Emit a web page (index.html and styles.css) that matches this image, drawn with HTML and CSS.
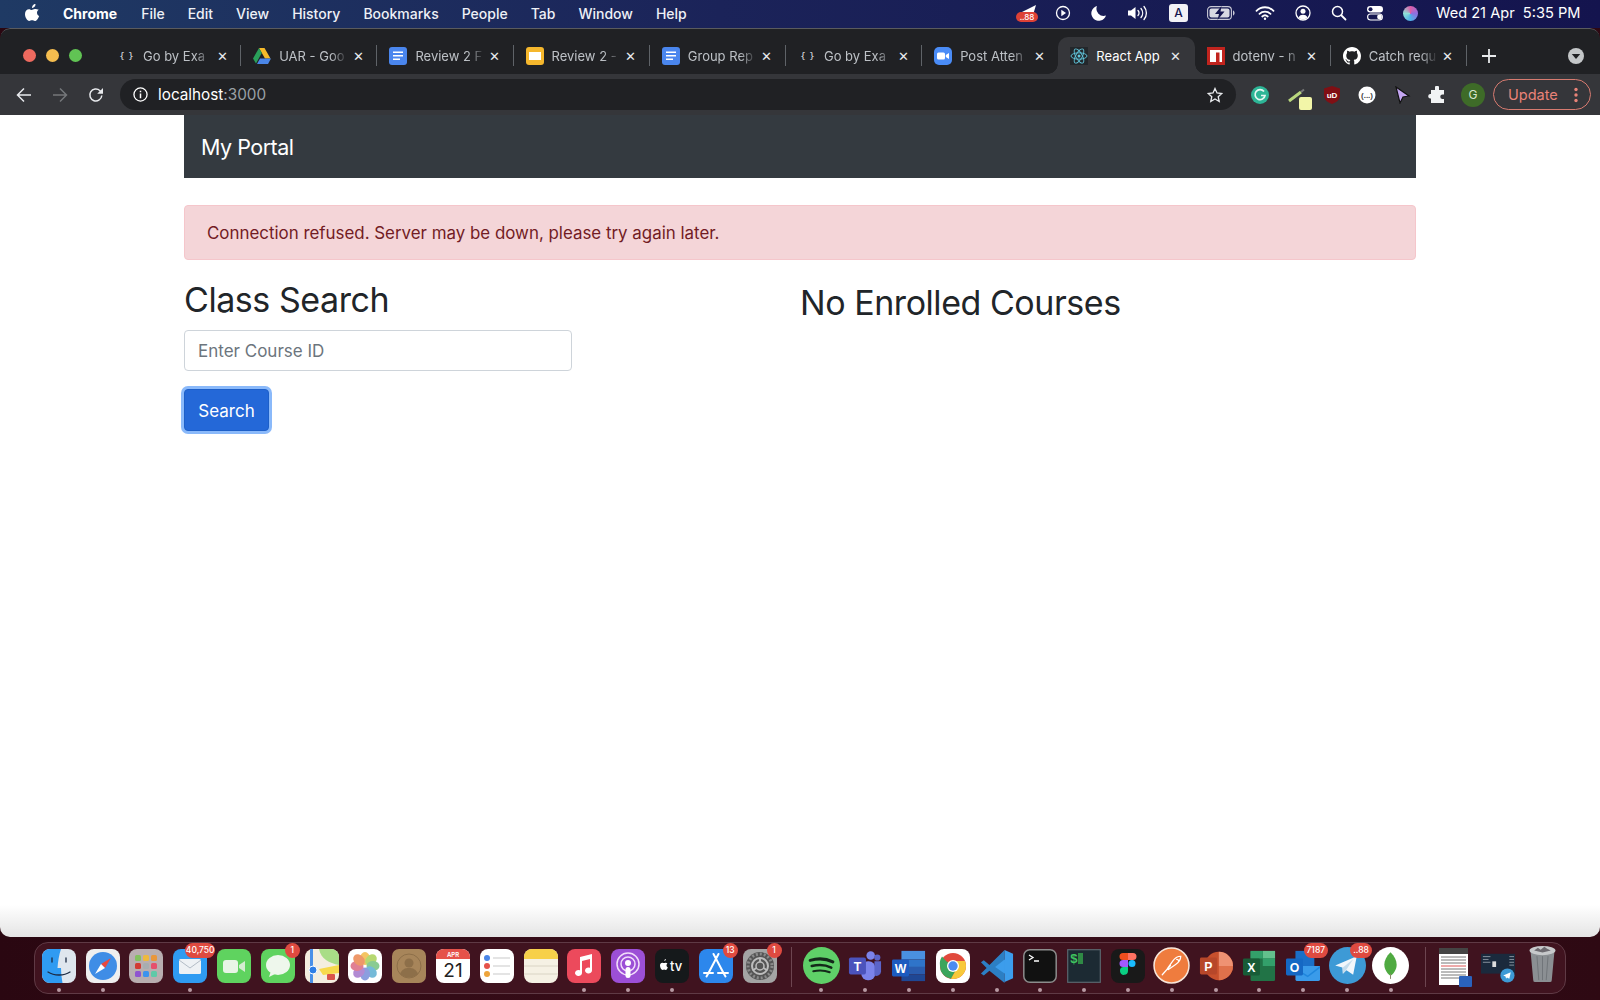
FILE: index.html
```html
<!DOCTYPE html>
<html lang="en">
<head>
  <meta charset="UTF-8">
  <title>React App</title>
  <link rel="stylesheet" href="styles.css">
</head>
<body>

<!-- menu bar -->
<header class="menubar">
  <svg class="apple" viewBox="0 0 16 18"><path fill="#fff" d="M11.2 0c.1 1.100-.3 2.100-1 2.900-.7.800-1.700 1.300-2.700 1.200-.1-1 .4-2.100 1-2.800C9 .5 10.200 0 11.200 0zM14.700 6.100c-1.200.8-1.900 1.900-1.900 3.200 0 1.500.9 2.800 2.300 3.400-.4 1.100-.9 2.100-1.600 3.100-.9 1.300-1.800 2.200-3 2.200-1.200 0-1.600-.7-3-.7s-1.900.7-3 .7c-1.200 0-2.100-1-3-2.400C.3 14 0 11.900 0 10.500c0-3.300 2.100-5.100 4.200-5.100 1.200 0 2.200.8 3 .8.700 0 1.900-.9 3.300-.9 1.200 0 3.300.3 4.200.8z"/></svg>
  <nav class="menu">
    <span class="menu-app">Chrome</span>
    <span>File</span>
    <span>Edit</span>
    <span>View</span>
    <span>History</span>
    <span>Bookmarks</span>
    <span>People</span>
    <span>Tab</span>
    <span>Window</span>
    <span>Help</span>
  </nav>
  <div class="status">
    <span class="status-item status-telegram">
      <svg viewBox="0 0 22 18" width="22" height="18"><path fill="#fff" d="M4 9 L20 1 L17 11 L11 9z"/><rect x="0" y="8" width="22" height="10" rx="5" fill="#dd4136"/></svg>
      <b class="status-badge">..88</b>
    </span>
    <svg class="status-item" viewBox="0 0 16 16" width="16" height="16"><circle cx="8" cy="8" r="6.500" fill="none" stroke="#fff" stroke-width="1.300"/><path fill="#fff" d="M6.300 4.800 11 8l-4.700 3.200z"/></svg>
    <svg class="status-item" viewBox="0 0 16 16" width="16" height="16"><path fill="#fff" d="M6 1a7.200 7.200 0 0 0 9 9.500A7.500 7.500 0 1 1 6 1z"/></svg>
    <svg class="status-item" viewBox="0 0 22 16" width="22" height="16"><path fill="#fff" d="M1 5.500h3L8.500 2v12L4 10.500H1z"/><path fill="none" stroke="#fff" stroke-width="1.300" stroke-linecap="round" d="M11 5.500a3.500 3.500 0 0 1 0 5M14 3.500a7 7 0 0 1 0 9M17 1.500a10 10 0 0 1 0 13"/></svg>
    <span class="status-item status-input">A</span>
    <svg class="status-item status-battery" viewBox="0 0 28 14" width="28" height="14"><rect x=".6" y=".6" width="23.800" height="12.800" rx="3.500" fill="none" stroke="#c9c9d6" stroke-width="1.100"/><path fill="#c9c9d6" d="M26 4.500c1 .3 1.600 1.300 1.600 2.500s-.6 2.200-1.600 2.500z"/><rect x="2.500" y="2.500" width="20" height="9" rx="2" fill="#d8d8e2"/><path fill="#15154f" d="M14.500 0 8 8h4l-1.500 6 7-8.500h-4z"/></svg>
    <svg class="status-item" viewBox="0 0 20 14" width="20" height="14"><path fill="none" stroke="#fff" stroke-width="1.800" stroke-linecap="round" d="M1.500 4.800a12 12 0 0 1 17 0M4.500 7.800a8 8 0 0 1 11 0M7.300 10.500a4 4 0 0 1 5.400 0"/><circle cx="10" cy="12.800" r="1.200" fill="#fff"/></svg>
    <svg class="status-item" viewBox="0 0 16 16" width="16" height="16"><circle cx="8" cy="8" r="7" fill="none" stroke="#fff" stroke-width="1.300"/><circle cx="8" cy="6.300" r="2.500" fill="#fff"/><path fill="#fff" d="M3.500 12.500C4.500 10.500 6 9.800 8 9.800s3.500.7 4.500 2.700A6.500 6.500 0 0 1 8 14.500a6.500 6.500 0 0 1-4.500-2z"/></svg>
    <svg class="status-item" viewBox="0 0 16 16" width="16" height="16"><circle cx="6.500" cy="6.500" r="5" fill="none" stroke="#fff" stroke-width="1.500"/><path stroke="#fff" stroke-width="1.800" stroke-linecap="round" d="m10.500 10.500 4 4"/></svg>
    <svg class="status-item" viewBox="0 0 16 16" width="16" height="16"><rect x="0" y="1" width="16" height="6.500" rx="3.250" fill="#fff"/><circle cx="3.500" cy="4.250" r="2" fill="#15154f"/><rect x=".6" y="9" width="14.800" height="6" rx="3" fill="none" stroke="#fff" stroke-width="1.100"/><circle cx="12.500" cy="12" r="2.400" fill="#fff"/></svg>
    <span class="status-item status-siri"></span>
    <span class="status-clock">Wed 21 Apr&nbsp; 5:35 PM</span>
  </div>
</header>

<main class="browser">
  <!-- tab strip -->
  <div class="tabstrip">
    <div class="traffic">
      <span class="light light-red"></span>
      <span class="light light-yellow"></span>
      <span class="light light-green"></span>
    </div>
    <div class="tabs">
      <div class="tab">
        <span class="favicon favicon-code">{ }</span>
        <span class="tab-title">Go by Exa</span>
        <span class="tab-close">✕</span>
      </div>
      <div class="tab">
        <svg class="favicon" viewBox="0 0 18 16"><path fill="#f6bb2a" d="M6 0h5.500l6 10.500h-5.500z"/><path fill="#2aa05a" d="M6 0l2.800 5L3 15.500 0 10.500z"/><path fill="#4a86e8" d="M4 16l3-5.500h11L15 16z"/></svg>
        <span class="tab-title">UAR - Goo</span>
        <span class="tab-close">✕</span>
      </div>
      <div class="tab">
        <svg class="favicon" viewBox="0 0 18 18"><rect width="18" height="18" rx="3" fill="#4a86ee"/><path fill="#fff" d="M4 4.500h10V6H4zM4 8h10v1.500H4zM4 11.500h7V13H4z"/></svg>
        <span class="tab-title">Review 2 F</span>
        <span class="tab-close">✕</span>
      </div>
      <div class="tab">
        <svg class="favicon" viewBox="0 0 18 18"><rect width="18" height="18" rx="3" fill="#f5b72d"/><rect x="3" y="5" width="12" height="8" fill="#fff"/></svg>
        <span class="tab-title">Review 2 -</span>
        <span class="tab-close">✕</span>
      </div>
      <div class="tab">
        <svg class="favicon" viewBox="0 0 18 18"><rect width="18" height="18" rx="3" fill="#4a86ee"/><path fill="#fff" d="M4 4.500h10V6H4zM4 8h10v1.500H4zM4 11.500h7V13H4z"/></svg>
        <span class="tab-title">Group Rep</span>
        <span class="tab-close">✕</span>
      </div>
      <div class="tab">
        <span class="favicon favicon-code">{ }</span>
        <span class="tab-title">Go by Exa</span>
        <span class="tab-close">✕</span>
      </div>
      <div class="tab tab-nosep">
        <svg class="favicon" viewBox="0 0 18 18"><rect width="18" height="18" rx="5" fill="#4a8cf7"/><rect x="3" y="5.500" width="8" height="7" rx="1.500" fill="#fff"/><path fill="#fff" d="m11.800 8 3.200-2v6l-3.200-2z"/></svg>
        <span class="tab-title">Post Atten</span>
        <span class="tab-close">✕</span>
      </div>
      <div class="tab tab-active">
        <svg class="favicon" viewBox="0 0 18 18"><rect width="18" height="18" fill="#23272b"/><g fill="none" stroke="#61c6dc" stroke-width=".9"><ellipse cx="9" cy="9" rx="8" ry="3.200"/><ellipse cx="9" cy="9" rx="8" ry="3.200" transform="rotate(60 9 9)"/><ellipse cx="9" cy="9" rx="8" ry="3.200" transform="rotate(120 9 9)"/></g><circle cx="9" cy="9" r="1.500" fill="#61c6dc"/></svg>
        <span class="tab-title">React App</span>
        <span class="tab-close">✕</span>
      </div>
      <div class="tab">
        <svg class="favicon" viewBox="0 0 18 18"><rect width="18" height="18" fill="#c1241e"/><path fill="#fff" d="M3 3h12v12h-2.500V5.500H9V15H3z"/></svg>
        <span class="tab-title">dotenv - n</span>
        <span class="tab-close">✕</span>
      </div>
      <div class="tab">
        <svg class="favicon" viewBox="0 0 16 16"><path fill="#fff" d="M8 0C3.580 0 0 3.580 0 8c0 3.540 2.290 6.530 5.470 7.590.4.070.55-.17.55-.38 0-.19-.01-.82-.01-1.490-2.010.37-2.530-.49-2.690-.94-.09-.23-.48-.94-.82-1.130-.28-.15-.68-.52-.01-.53.630-.01 1.080.58 1.230.82.720 1.210 1.870.87 2.330.66.070-.52.280-.87.510-1.070-1.780-.2-3.640-.89-3.640-3.950 0-.87.310-1.590.82-2.150-.08-.2-.36-1.020.08-2.120 0 0 .67-.21 2.200.82.640-.18 1.320-.27 2-.27s1.360.09 2 .27c1.530-1.040 2.200-.82 2.200-.82.440 1.100.16 1.920.08 2.120.51.560.82 1.270.82 2.150 0 3.070-1.870 3.750-3.650 3.950.29.250.54.730.54 1.480 0 1.070-.01 1.930-.01 2.200 0 .21.150.46.550.38A8.010 8.010 0 0 0 16 8c0-4.420-3.580-8-8-8z"/></svg>
        <span class="tab-title">Catch requ</span>
        <span class="tab-close">✕</span>
      </div>
    </div>
    <svg class="newtab" viewBox="0 0 14 14"><path stroke="#e8eaed" stroke-width="1.800" d="M7 0v14M0 7h14"/></svg>
    <svg class="tabsearch" viewBox="0 0 16 16"><circle cx="8" cy="8" r="8" fill="#c4c7c9"/><path fill="#202124" d="M3.800 6h8.400L8 11z"/></svg>
  </div>

  <!-- toolbar -->
  <div class="toolbar">
    <div class="nav-buttons">
      <svg viewBox="0 0 16 16"><path fill="none" stroke="#e8eaed" stroke-width="1.500" d="M15 8H1.500M8 1.500 1.500 8 8 14.500"/></svg>
      <svg viewBox="0 0 16 16"><path fill="none" stroke="#75777a" stroke-width="1.500" d="M1 8h13.500M8 1.500 14.500 8 8 14.500"/></svg>
      <svg viewBox="0 0 16 16"><path fill="none" stroke="#e8eaed" stroke-width="1.500" d="M13.800 8.500A6 6 0 1 1 12 3.700l1.800 1.800"/><path fill="#e8eaed" d="M15 1v5.800H9.200z"/></svg>
    </div>
    <div class="urlbar">
      <svg class="url-info" viewBox="0 0 16 16"><circle cx="8" cy="8" r="7" fill="none" stroke="#fff" stroke-width="1.400"/><path fill="#fff" d="M7.200 7h1.600v5H7.200zM7.200 4h1.600v1.600H7.200z"/></svg>
      <span class="url-text">localhost<span class="url-port">:3000</span></span>
      <svg class="url-star" viewBox="0 0 16 16"><path fill="none" stroke="#e8eaed" stroke-width="1.300" d="m8 1.500 2 4.500 4.800.5-3.600 3.200 1 4.800L8 12l-4.200 2.500 1-4.800L1.200 6.500 6 6z"/></svg>
    </div>
    <div class="extensions">
      <svg viewBox="0 0 18 18"><circle cx="9" cy="9" r="9" fill="#2db596"/><path fill="none" stroke="#e6f7f2" stroke-width="1.700" d="M13 5.500A5 5 0 1 0 14 9.500H10"/></svg>
      <span class="ext-note">
        <svg viewBox="0 0 18 18"><path stroke="#b9d77d" stroke-width="3" d="m1 15 12-9"/><path stroke="#777" stroke-width="2" d="m13 6 3-2.500"/></svg>
        <i class="ext-sticky"></i>
      </span>
      <svg viewBox="0 0 18 18"><path fill="#800f14" d="M9 0l8 2.500V9c0 4.500-3.500 7.500-8 9-4.500-1.500-8-4.500-8-9V2.500z"/><text x="9" y="11.500" text-anchor="middle" class="ext-ub">uD</text></svg>
      <svg viewBox="0 0 18 18"><circle cx="9" cy="9" r="8.500" fill="#fff"/><text x="9" y="12" text-anchor="middle" class="ext-dots">(...)</text></svg>
      <svg viewBox="0 0 18 18"><path fill="#c4a6f2" stroke="#111" stroke-width="1.200" d="M3 1 16 10l-6 1-3 6z"/></svg>
      <svg viewBox="0 0 18 18"><path fill="#f1f3f4" d="M7 1.500a2 2 0 0 1 4 0V4h5v4.500h-1.500a2.200 2.200 0 0 0 0 4.500H16v4H3v-4.500H2a2.300 2.300 0 0 1 0-4.500h1V4h4z"/></svg>
      <span class="avatar">G</span>
    </div>
    <div class="update">
      <span>Update</span>
      <svg viewBox="0 0 4 16" width="4" height="16"><g fill="#e98378"><circle cx="2" cy="2.500" r="1.700"/><circle cx="2" cy="8" r="1.700"/><circle cx="2" cy="13.500" r="1.700"/></g></svg>
    </div>
  </div>

  <!-- the page -->
  <div class="page">
    <div class="container">
      <div class="navbar">My Portal</div>
      <div class="alert">Connection refused. Server may be down, please try again later.</div>
      <div class="row">
        <section class="col">
          <h2 class="title">Class Search</h2>
          <input class="field" type="text" placeholder="Enter Course ID">
          <button class="btn" type="button">Search</button>
        </section>
        <section class="col">
          <h2 class="title title-right">No Enrolled Courses</h2>
        </section>
      </div>
    </div>
  </div>
</main>

<!-- dock -->
<footer class="dockbar">
  <div class="dock">
    <div class="dock-item running"><svg viewBox="0 0 34 34"><rect width="34" height="34" rx="8" fill="#dfe6ee"/><path fill="#2f9bf2" d="M8 0h11c-2 6-3 12-3.500 19H19c0 5 .5 10 1.500 15H8a8 8 0 0 1-8-8V8a8 8 0 0 1 8-8z"/><path fill="none" stroke="#1c2b44" stroke-width="1.300" stroke-linecap="round" d="M10 9v4M24 9v4M6 23c6 4 16 4 22 0"/></svg></div>
    <div class="dock-item running"><svg viewBox="0 0 34 34"><rect width="34" height="34" rx="8" fill="#efefef"/><circle cx="17" cy="17" r="14" fill="#3f8de6"/><path fill="#e9483f" d="m25 9-10 6 4 4z"/><path fill="#fff" d="m9 25 6-10 4 4z"/></svg></div>
    <div class="dock-item"><svg viewBox="0 0 34 34"><rect width="34" height="34" rx="8" fill="#b9aeb0"/><g><rect x="6" y="6" width="6" height="6" rx="1.500" fill="#83c25f"/><rect x="14" y="6" width="6" height="6" rx="1.500" fill="#eeb93e"/><rect x="22" y="6" width="6" height="6" rx="1.500" fill="#e9973c"/><rect x="6" y="14" width="6" height="6" rx="1.500" fill="#d13b34"/><rect x="14" y="14" width="6" height="6" rx="1.500" fill="#a8adb0"/><rect x="22" y="14" width="6" height="6" rx="1.500" fill="#e5506c"/><rect x="6" y="22" width="6" height="6" rx="1.500" fill="#8f54d0"/><rect x="14" y="22" width="6" height="6" rx="1.500" fill="#3d93ee"/><rect x="22" y="22" width="6" height="6" rx="1.500" fill="#5fc9a8"/></g></svg></div>
    <div class="dock-item running"><svg viewBox="0 0 34 34"><rect width="34" height="34" rx="8" fill="#2f9bf2"/><rect x="6" y="10" width="22" height="15" rx="1.500" fill="#eef1f4"/><path fill="none" stroke="#b3bcc6" d="m6 11 11 8 11-8"/></svg><b class="dock-badge badge-wide">40,750</b></div>
    <div class="dock-item"><svg viewBox="0 0 34 34"><rect width="34" height="34" rx="8" fill="#5fd35f"/><rect x="6" y="11" width="15" height="13" rx="3" fill="#e8f5e6"/><path fill="#d4ecd1" d="m22 16 6-4v11l-6-4z"/></svg></div>
    <div class="dock-item"><svg viewBox="0 0 34 34"><rect width="34" height="34" rx="8" fill="#5fd35f"/><ellipse cx="17" cy="16" rx="12" ry="10" fill="#eef7ec"/><path fill="#eef7ec" d="m10 22-2 6 8-4z"/></svg><b class="dock-badge">1</b></div>
    <div class="dock-item"><svg viewBox="0 0 34 34"><rect width="34" height="34" rx="8" fill="#f4eee0"/><path fill="#a9dd87" d="M14 0h12a8 8 0 0 1 8 8v8C24 14 16 10 14 0z"/><path fill="#f7d94c" d="M14 20l20-4v8L18 26z"/><rect x="5" y="0" width="3" height="34" fill="#4a90e8"/><circle cx="8" cy="21" r="4" fill="#2f7fe6" stroke="#fff"/><rect x="22" y="25" width="8" height="6" rx="1" fill="#d9534a"/></svg></div>
    <div class="dock-item"><svg viewBox="0 0 34 34"><rect width="34" height="34" rx="8" fill="#fff"/><g opacity=".8"><ellipse cx="17" cy="9.500" rx="5" ry="6.500" fill="#f2b63c"/><ellipse cx="23" cy="11" rx="5" ry="6.500" fill="#a5cf4e" transform="rotate(45 23 11)"/><ellipse cx="25" cy="17" rx="6.500" ry="5" fill="#6ebf77"/><ellipse cx="23" cy="23" rx="5" ry="6.500" fill="#53a9cf" transform="rotate(-45 23 23)"/><ellipse cx="17" cy="25" rx="5" ry="6.500" fill="#6f86d8"/><ellipse cx="11" cy="23" rx="5" ry="6.500" fill="#a06fc9" transform="rotate(45 11 23)"/><ellipse cx="9" cy="17" rx="6.500" ry="5" fill="#d9607a"/><ellipse cx="11" cy="11" rx="5" ry="6.500" fill="#ea7f45" transform="rotate(-45 11 11)"/></g></svg></div>
    <div class="dock-item"><svg viewBox="0 0 34 34"><rect width="34" height="34" rx="7" fill="#a7855a"/><circle cx="17" cy="17" r="12" fill="none" stroke="#8d6f49"/><circle cx="17" cy="14" r="4.500" fill="#8d6f49"/><path fill="#8d6f49" d="M8 25c2-5 5-6 9-6s7 1 9 6c-2 2-5 3.500-9 3.500s-7-1.500-9-3.500z"/></svg></div>
    <div class="dock-item"><svg viewBox="0 0 34 34"><rect width="34" height="34" rx="8" fill="#fff"/><path fill="#e5524a" d="M8 0h18a8 8 0 0 1 8 8v2H0V8a8 8 0 0 1 8-8z"/><text x="17" y="7.500" text-anchor="middle" class="cal-month">APR</text><text x="17" y="28" text-anchor="middle" class="cal-day">21</text></svg></div>
    <div class="dock-item"><svg viewBox="0 0 34 34"><rect width="34" height="34" rx="8" fill="#fff"/><circle cx="7" cy="9" r="3" fill="#4a86e8"/><circle cx="7" cy="17" r="3" fill="#e5524a"/><circle cx="7" cy="25" r="3" fill="#eea53c"/><path stroke="#c9c9c9" d="M13 9h17M13 17h17M13 25h17"/></svg></div>
    <div class="dock-item"><svg viewBox="0 0 34 34"><rect width="34" height="34" rx="8" fill="#f5f1e4"/><path fill="#f7d04a" d="M8 0h18a8 8 0 0 1 8 8v2H0V8a8 8 0 0 1 8-8z"/><path stroke="#d9d4c4" d="M0 17h34M0 25h34"/></svg></div>
    <div class="dock-item running"><svg viewBox="0 0 34 34"><rect width="34" height="34" rx="8" fill="#ec4a5c"/><path fill="#fff" d="M13 8l12-3v16.500a3.500 3 0 1 1-2-2.700V10l-8 2v12a3.500 3 0 1 1-2-2.700z"/></svg></div>
    <div class="dock-item running"><svg viewBox="0 0 34 34"><rect width="34" height="34" rx="8" fill="#9c4fd6"/><circle cx="17" cy="15" r="11" fill="none" stroke="#f1ddfa" stroke-width="1.500"/><circle cx="17" cy="15" r="7" fill="none" stroke="#f1ddfa" stroke-width="1.500"/><circle cx="17" cy="14" r="3" fill="#fff"/><rect x="14.500" y="18" width="5" height="11" rx="2.500" fill="#fff"/></svg></div>
    <div class="dock-item running"><svg viewBox="0 0 34 34"><rect width="34" height="34" rx="8" fill="#15191b"/><path fill="#fff" d="M9.500 12c.8 0 1.500-.9 1.400-1.900-.8 0-1.600.9-1.500 1.900zM11.500 16.500c0-1 .5-1.500 1-1.900-.5-.6-1.200-.9-1.900-.9-.7 0-1.200.4-1.600.4-.5 0-1-.4-1.700-.4-1.200 0-2.300 1-2.300 2.800 0 2 1.300 4.500 2.500 4.500.6 0 1-.4 1.600-.4.600 0 .9.400 1.600.4 1 0 1.900-1.700 2.100-2.700-.8-.3-1.300-1-1.300-1.800z"/><text x="15" y="22" class="tv-text">tv</text></svg></div>
    <div class="dock-item"><svg viewBox="0 0 34 34"><rect width="34" height="34" rx="8" fill="#2c87ec"/><path fill="none" stroke="#fff" stroke-width="2" stroke-linecap="round" d="M19.500 5 9.500 24M14.500 5l10 19M5 24h9M19 24h10M9.500 24l-2 3.500M24.500 24l2 3.500"/></svg><b class="dock-badge">13</b></div>
    <div class="dock-item"><svg viewBox="0 0 34 34"><rect width="34" height="34" rx="8" fill="#a4a4a4"/><circle cx="17" cy="17" r="14" fill="#555"/><circle cx="17" cy="17" r="12" fill="none" stroke="#8a8a8a" stroke-width="3" stroke-dasharray="2 2"/><circle cx="17" cy="17" r="8" fill="none" stroke="#bdbdbd" stroke-width="2"/><path fill="none" stroke="#bdbdbd" stroke-width="1.800" d="M17 13v-4M20.500 19l4 2.500M13.500 19l-4 2.500"/><circle cx="17" cy="17" r="4" fill="none" stroke="#bdbdbd" stroke-width="1.500"/></svg><b class="dock-badge">1</b></div>
    <i class="dock-sep"></i>
    <div class="dock-item running big"><svg viewBox="0 0 36 36"><circle cx="18" cy="18" r="18" fill="#5fd068"/><path fill="none" stroke="#14291a" stroke-width="3" stroke-linecap="round" d="M7 13c7-2 15-2 22 1.500"/><path fill="none" stroke="#14291a" stroke-width="2.500" stroke-linecap="round" d="M8.500 18.500c6-1.500 13-1.500 19 1.500"/><path fill="none" stroke="#14291a" stroke-width="2" stroke-linecap="round" d="M10 23.500c5-1 11-1 16 1"/></svg></div>
    <div class="dock-item running"><svg viewBox="0 0 36 36"><circle cx="24" cy="7" r="4.500" fill="#7b83eb"/><circle cx="31" cy="9" r="3.300" fill="#5b64c9"/><rect x="14" y="13" width="15" height="20" rx="7" fill="#7b83eb"/><path fill="#5b64c9" d="M28 13h7v11a5 5 0 0 1-7 4z"/><rect x="1" y="9" width="18" height="18" rx="2" fill="#4b53bc"/><text x="10" y="23" text-anchor="middle" class="app-letter">T</text></svg></div>
    <div class="dock-item running"><svg viewBox="0 0 36 36"><rect x="10" y="2" width="25" height="9" fill="#4a90e0"/><rect x="10" y="11" width="25" height="8" fill="#2f74c9"/><rect x="10" y="19" width="25" height="8" fill="#2a5cae"/><rect x="10" y="27" width="25" height="7" fill="#1f4794"/><rect x="0" y="11" width="18" height="18" rx="1.500" fill="#1c5bbf"/><text x="9" y="25" text-anchor="middle" class="app-letter">W</text></svg></div>
    <div class="dock-item running"><svg viewBox="0 0 34 34"><rect width="34" height="34" rx="8" fill="#fff"/><circle cx="17" cy="17" r="13" fill="#e0493d"/><path fill="#3ba55d" d="M4 17a13 13 0 0 0 11 12.800l6-10.300L10 12 6 7.500A13 13 0 0 0 4 17z"/><path fill="#f8c93a" d="M17 30a13 13 0 0 0 13-13c0-2-.5-3.500-1-5H17l4 7-6 10.800z"/><circle cx="17" cy="17" r="6" fill="#fff"/><circle cx="17" cy="17" r="4.700" fill="#4c8bf0"/></svg></div>
    <div class="dock-item running"><svg viewBox="0 0 36 36"><path fill="#2c7fc4" d="M26 1 10 17l-6-5-3 2 6 6-6 6 3 2 6-5 16 13z"/><path fill="#3c9dec" d="M26 1l9 4v26l-9 4zM26 11 16 19l10 7z"/></svg></div>
    <div class="dock-item running"><svg viewBox="0 0 34 34"><rect x=".8" y=".8" width="32.400" height="32.400" rx="6" fill="#111" stroke="#8c8c8c" stroke-width="1.500"/><path fill="none" stroke="#fff" stroke-width="1.300" d="m6 6 4 2.500L6 11M11 12h5"/></svg></div>
    <div class="dock-item running"><svg viewBox="0 0 34 34"><rect x=".7" y=".7" width="32.600" height="32.600" fill="#1c2a33" stroke="#5a666e" stroke-width="1.200"/><text x="3" y="14" class="iterm-text">$</text><rect x="11" y="4" width="5" height="11" fill="#2f8a45"/></svg></div>
    <div class="dock-item running"><svg viewBox="0 0 34 34"><rect width="34" height="34" rx="8" fill="#191919"/><path fill="#f24e1e" d="M12 4h5v7h-5a3.500 3.500 0 0 1 0-7z"/><path fill="#ff7262" d="M17 4h5a3.500 3.500 0 0 1 0 7h-5z"/><path fill="#a259ff" d="M12 11h5v7h-5a3.500 3.500 0 0 1 0-7z"/><circle cx="21" cy="14.500" r="3.500" fill="#1abcfe"/><path fill="#0acf83" d="M12 18h5v4a4 4 0 1 1-5-4z"/></svg></div>
    <div class="dock-item running big"><svg viewBox="0 0 36 36"><circle cx="18" cy="18" r="17" fill="#ef7c3e" stroke="#f7e6da" stroke-width="1.500"/><path fill="none" stroke="#fff" stroke-width="1.200" stroke-linecap="round" d="M9 27 17 18M14 21l5-7c2-3 5-5 8-5 0 3-2 6-5 8l-7 5M23 12a2 2 0 0 1 2 2"/></svg></div>
    <div class="dock-item running"><svg viewBox="0 0 36 36"><circle cx="21" cy="18" r="15" fill="#c8502d"/><path fill="#ef9273" d="M21 3a15 15 0 0 1 15 15H21z"/><path fill="#e0714b" d="M21 18h15a15 15 0 0 1-15 15z"/><rect x="1" y="9" width="18" height="18" rx="1.500" fill="#b7472a"/><text x="10" y="23" text-anchor="middle" class="app-letter">P</text></svg></div>
    <div class="dock-item running"><svg viewBox="0 0 36 36"><rect x="9" y="2" width="26" height="32" rx="1.500" fill="#217346"/><rect x="22" y="2" width="13" height="8" fill="#63c08c"/><rect x="22" y="10" width="13" height="8" fill="#33a06a"/><rect x="9" y="2" width="13" height="8" fill="#33a06a"/><rect x="1" y="10" width="18" height="18" rx="1.500" fill="#185c37"/><text x="10" y="24" text-anchor="middle" class="app-letter">X</text></svg></div>
    <div class="dock-item running"><svg viewBox="0 0 36 36"><rect x="10" y="2" width="20" height="18" fill="#1b6fc8"/><path fill="#3a9bea" d="M10 18 36 18v14a2 2 0 0 1-2 2H12a2 2 0 0 1-2-2z"/><path fill="#1f86dd" d="M10 20 23 28 36 18v2L23 30 10 22z"/><rect x="0" y="10" width="18" height="18" rx="1.500" fill="#1568c4"/><text x="9" y="24" text-anchor="middle" class="app-letter">O</text></svg><b class="dock-badge badge-mid">7187</b></div>
    <div class="dock-item running big"><svg viewBox="0 0 36 36"><circle cx="18" cy="18" r="18" fill="#3d9ad6"/><path fill="#f2f7fb" d="M6 18 27 9l-3.500 18-6.500-4.500-3.500 3.500-.5-6z"/><path fill="#c4dcec" d="m13.500 20 10-8-7 10.500-3 3.500z"/></svg><b class="dock-badge badge-mid">..88</b></div>
    <div class="dock-item running big"><svg viewBox="0 0 36 36"><circle cx="18" cy="18" r="18" fill="#fff"/><path fill="#4faa41" d="M18 5c4 4 6 8 6 12 0 5-3 9-6 11-3-2-6-6-6-11 0-4 2-8 6-12z"/><path stroke="#8a8a6a" d="M18 26v5"/></svg></div>
    <i class="dock-sep dock-sep-end"></i>
    <div class="dock-item"><svg viewBox="0 0 34 40" class="thumb"><rect x="1" y="1" width="29" height="37" fill="#fff"/><rect x="1" y="1" width="29" height="6" fill="#444"/><path stroke="#777" stroke-width="1" d="M3 10h25M3 13h25M3 16h25M3 22h25M3 25h25M3 28h25M3 31h18"/><path stroke="#d55" stroke-width="1" d="M3 19h25"/><rect x="21" y="29" width="13" height="11" rx="1" fill="#2a62bd"/></svg></div>
    <div class="dock-item"><svg viewBox="0 0 36 34" class="thumb"><rect x="0" y="3" width="36" height="21" fill="#1b2a3d"/><path stroke="#8c97a3" stroke-width="1" d="M2 6h8M2 9h6M2 12h8M30 6h5M30 9h5M30 12h5M30 15h5"/><rect x="12" y="11" width="4" height="6" fill="#ddd"/><circle cx="28" cy="26" r="7.500" fill="#3d9ad6"/><path fill="#fff" d="m23.500 26 8-3.500-1.500 7-2.500-1.500-1 1.500-.5-2.500z"/></svg></div>
    <div class="dock-item big"><svg viewBox="0 0 34 40" class="thumb"><path fill="#8b8f93" d="M4 6h26l-3 32a2 2 0 0 1-2 2H9a2 2 0 0 1-2-2z"/><ellipse cx="17" cy="6" rx="14" ry="5" fill="#c7c9cb"/><path stroke="#6f7377" d="M11 12l2 26M17 12v26M23 12l-2 26"/><path fill="#6d6a70" d="M8 6l4-3 3 2 4-3 3 2 4 2-9 2z"/></svg></div>
  </div>
</footer>

</body>
</html>
```

FILE: styles.css
```css
* { box-sizing: border-box; }

body {
  margin: 0;
  width: 1600px;
  height: 1000px;
  overflow: hidden;
  display: flex;
  flex-direction: column;
  font-family: Inter, "Noto Sans", sans-serif;
  background: linear-gradient(90deg, #2a0711, #3a0e1a 50%, #2e0913);
}

/* menu bar */
.menubar {
  height: 28px;
  flex: none;
  display: flex;
  align-items: center;
  padding: 0 0 2px 25px;
  color: #fff;
  font-size: 14px;
  background: linear-gradient(90deg, #1f3a64, #1b2359 45%, #14144e);
}

.apple { width: 15px; height: 17px; margin-bottom: 2px; }

.menu {
  display: flex;
  gap: 23px;
  margin-left: 23px;
  font-weight: 500;
  color: #eef0f6;
}

.menu-app { font-weight: 700; color: #fff; margin-right: 1px; }

.status {
  margin-left: auto;
  width: 584px;
  display: flex;
  align-items: center;
}

.status-item { flex: none; margin-right: 20px; }

.status-telegram {
  position: relative;
  width: 22px;
  height: 20px;
  margin-right: 17px;
}

.status-telegram svg { display: block; margin-top: 1px; }

.status-badge {
  position: absolute;
  left: 0;
  right: 0;
  top: 9px;
  font-size: 8px;
  line-height: 10px;
  font-weight: 500;
  text-align: center;
}

.status-input {
  width: 19px;
  height: 18px;
  margin-right: 19px;
  border-radius: 3px;
  background: #f2f2f6;
  color: #15154f;
  font-size: 12px;
  font-weight: 500;
  line-height: 18px;
  text-align: center;
}

.status-siri {
  width: 15px;
  height: 15px;
  margin-right: 18px;
  border-radius: 50%;
  background: conic-gradient(#df5ea8, #8f6fe0, #4fb2e8, #8fe0d8, #df5ea8);
}

.status-clock { font-size: 14.600px; white-space: nowrap; }

/* browser window */
.browser {
  flex: none;
  height: 909px;
  display: flex;
  flex-direction: column;
  border-radius: 10px;
  overflow: hidden;
}

.tabstrip {
  height: 46px;
  flex: none;
  display: flex;
  align-items: flex-end;
  background: #202124;
  border-top: 1px solid #5a5b5e;
  border-radius: 10px 10px 0 0;
}

.traffic {
  width: 105px;
  flex: none;
  display: flex;
  gap: 10px;
  padding: 0 0 12px 23px;
  align-self: flex-end;
}

.light { width: 13px; height: 13px; border-radius: 50%; }
.light-red { background: #ee6a5f; }
.light-yellow { background: #f5bd4f; }
.light-green { background: #61c454; }

.tabs { display: flex; flex: none; }

.tab {
  position: relative;
  width: 136.200px;
  height: 37px;
  flex: none;
  display: flex;
  align-items: center;
  padding: 0 12px;
  font-size: 13px;
  color: #bdc1c6;
}

.tab::after {
  content: "";
  position: absolute;
  right: 0;
  top: 8px;
  height: 21px;
  width: 1px;
  background: #5f6368;
}

.tab-nosep::after { display: none; }

.tab-active {
  background: #35363a;
  color: #fff;
  border-radius: 10px 10px 0 0;
}

/* the small curves where the active tab meets the toolbar */
.tab-active::before,
.tab-active::after {
  content: "";
  position: absolute;
  top: auto;
  bottom: 0;
  width: 10px;
  height: 10px;
}

.tab-active::before {
  left: -10px;
  background: radial-gradient(circle at 0 0, transparent 9.500px, #35363a 10px);
}

.tab-active::after {
  right: -10px;
  background: radial-gradient(circle at 100% 0, transparent 9.500px, #35363a 10px);
}

.favicon {
  width: 18px;
  height: 18px;
  flex: none;
  margin-right: 8px;
}

.favicon-code {
  font-family: "DejaVu Sans Mono", monospace;
  font-size: 9px;
  line-height: 18px;
  text-align: center;
  color: #e8eaed;
  white-space: nowrap;
  letter-spacing: -1px;
}

.tab-title {
  flex: 1;
  min-width: 0;
  white-space: nowrap;
  -webkit-mask-image: linear-gradient(90deg, #000 75%, transparent);
  mask-image: linear-gradient(90deg, #000 75%, transparent);
}

.tab-active .tab-title { -webkit-mask-image: none; mask-image: none; }

.tab-close {
  flex: none;
  width: 14px;
  margin-left: 3px;
  font-size: 13px;
  text-align: center;
  color: #e8eaed;
}

.newtab { width: 14px; height: 14px; margin: 0 0 11px 15px; flex: none; }
.tabsearch { width: 16px; height: 16px; margin: 0 0 10px 72px; flex: none; }

/* toolbar */
.toolbar {
  height: 41px;
  flex: none;
  display: flex;
  align-items: center;
  padding: 0 9px 0 16px;
  background: #35363a;
}

.nav-buttons {
  width: 104px;
  flex: none;
  display: flex;
  gap: 20px;
}

.nav-buttons svg { width: 16px; height: 16px; }

.urlbar {
  width: 1116px;
  height: 31px;
  flex: none;
  display: flex;
  align-items: center;
  padding: 0 13px;
  border-radius: 16px;
  background: #202124;
  font-size: 15.300px;
}

.url-info { width: 15px; height: 15px; margin-right: 10px; }
.url-text { color: #fff; }
.url-port { color: #9aa0a6; }
.url-star { width: 16px; height: 16px; margin-left: auto; }

.extensions {
  flex: none;
  width: 257px;
  display: flex;
  align-items: center;
  gap: 17px;
  padding-left: 15px;
}

.extensions > svg { width: 18px; height: 18px; flex: none; }

.ext-note { position: relative; width: 18px; height: 18px; flex: none; margin-left: 2px; }
.ext-note svg { width: 18px; height: 18px; display: block; }

.ext-sticky {
  position: absolute;
  right: -6px;
  bottom: -6px;
  width: 13px;
  height: 13px;
  border-radius: 2px;
  background: #f2f6a8;
}

.ext-ub { font-size: 8px; font-weight: 700; fill: #fff; font-family: "Liberation Sans", sans-serif; }
.ext-dots { font-size: 8px; font-weight: 700; fill: #444; font-family: "Liberation Sans", sans-serif; }

.avatar {
  width: 24px;
  height: 24px;
  flex: none;
  margin-left: -2px;
  border-radius: 50%;
  background: #3e6b28;
  color: #d9e6cf;
  font-size: 12px;
  line-height: 24px;
  text-align: center;
}

.update {
  width: 98px;
  height: 31px;
  flex: none;
  display: flex;
  align-items: center;
  justify-content: space-between;
  padding: 0 12px 0 14px;
  border: 1px solid #d77b70;
  border-radius: 16px;
  color: #e98378;
  font-size: 14.500px;
}

/* page */
.page {
  flex: 1;
  min-height: 0;
  background: linear-gradient(to top, #e4e4e4, #fff 32px);
}

.container { width: 1232px; margin: 0 auto; }

.navbar {
  height: 63px;
  display: flex;
  align-items: center;
  padding-left: 17px;
  background: #343a40;
  color: #fff;
  font-size: 21.500px;
  letter-spacing: -.5px;
}

.alert {
  height: 55px;
  margin-top: 27px;
  display: flex;
  align-items: center;
  padding-left: 22px;
  border: 1px solid #f5c6cb;
  border-radius: 4px;
  background: #f4d5d8;
  color: #721c24;
  font-size: 16.900px;
}

.row { display: grid; grid-template-columns: 1fr 1fr; }

.title {
  margin: 19px 0 9px;
  font-size: 34px;
  font-weight: 400;
  line-height: 42px;
  letter-spacing: -.45px;
  color: #212529;
}

.title-right { margin-top: 22px; }

.field {
  display: block;
  width: 388px;
  height: 41px;
  padding: 1px 13px 0;
  border: 1px solid #ced4da;
  border-radius: 4px;
  font: inherit;
  font-size: 17px;
}

.field::placeholder { color: #6c757d; opacity: 1; }

.btn {
  display: block;
  width: 85px;
  height: 42px;
  margin-top: 18px;
  padding: 1px 0 0;
  border: 1px solid #1d5fc8;
  border-radius: 4px;
  background: #2468d8;
  box-shadow: 0 0 0 3px #8ab9fa;
  color: #fff;
  font: inherit;
  font-size: 17px;
}

/* dock */
.dockbar { flex: 1; padding: 5px 34px 0; }

.dock {
  height: 52px;
  display: flex;
  padding-left: 2px;
  border: 1px solid #5f3a45;
  border-radius: 14px;
  background: #40131f;
}

.dock-item {
  position: relative;
  width: 43.800px;
  flex: none;
  display: flex;
  justify-content: center;
  padding-top: 6px;
}

.dock-item > svg { width: 34px; height: 34px; flex: none; }
.dock-item.big { padding-top: 4px; }
.dock-item.big > svg { width: 37px; height: 37px; }
.dock-item > .thumb { height: 40px; margin-top: -2px; }

.running::after {
  content: "";
  position: absolute;
  left: 50%;
  bottom: 1px;
  width: 4px;
  height: 4px;
  margin-left: -2px;
  border-radius: 50%;
  background: #b79aa3;
}

.dock-badge {
  position: absolute;
  top: 0;
  right: 0;
  min-width: 15px;
  height: 15px;
  padding: 0 3px;
  border-radius: 8px;
  background: #df4a40;
  color: #fff;
  font-size: 8.500px;
  font-weight: 500;
  line-height: 15px;
  text-align: center;
}

.badge-wide { right: -3px; width: 30px; padding: 0; }
.badge-mid { right: -3px; }

.dock-sep {
  width: 1px;
  height: 40px;
  margin: 4px 8px 0 9px;
  flex: none;
  background: #6d4550;
}

.dock-sep-end { margin: 4px 7px 0 12px; }

.cal-month { font-size: 6px; font-weight: 600; fill: #fff; }
.cal-day { font-size: 19px; fill: #222; }
.tv-text { font-size: 13px; font-weight: 500; fill: #fff; }
.app-letter { font-size: 13px; font-weight: 700; fill: #fff; font-family: "Liberation Sans", sans-serif; }
.iterm-text { font-size: 13px; font-weight: 700; fill: #3fc35f; font-family: "Liberation Mono", monospace; }
```
